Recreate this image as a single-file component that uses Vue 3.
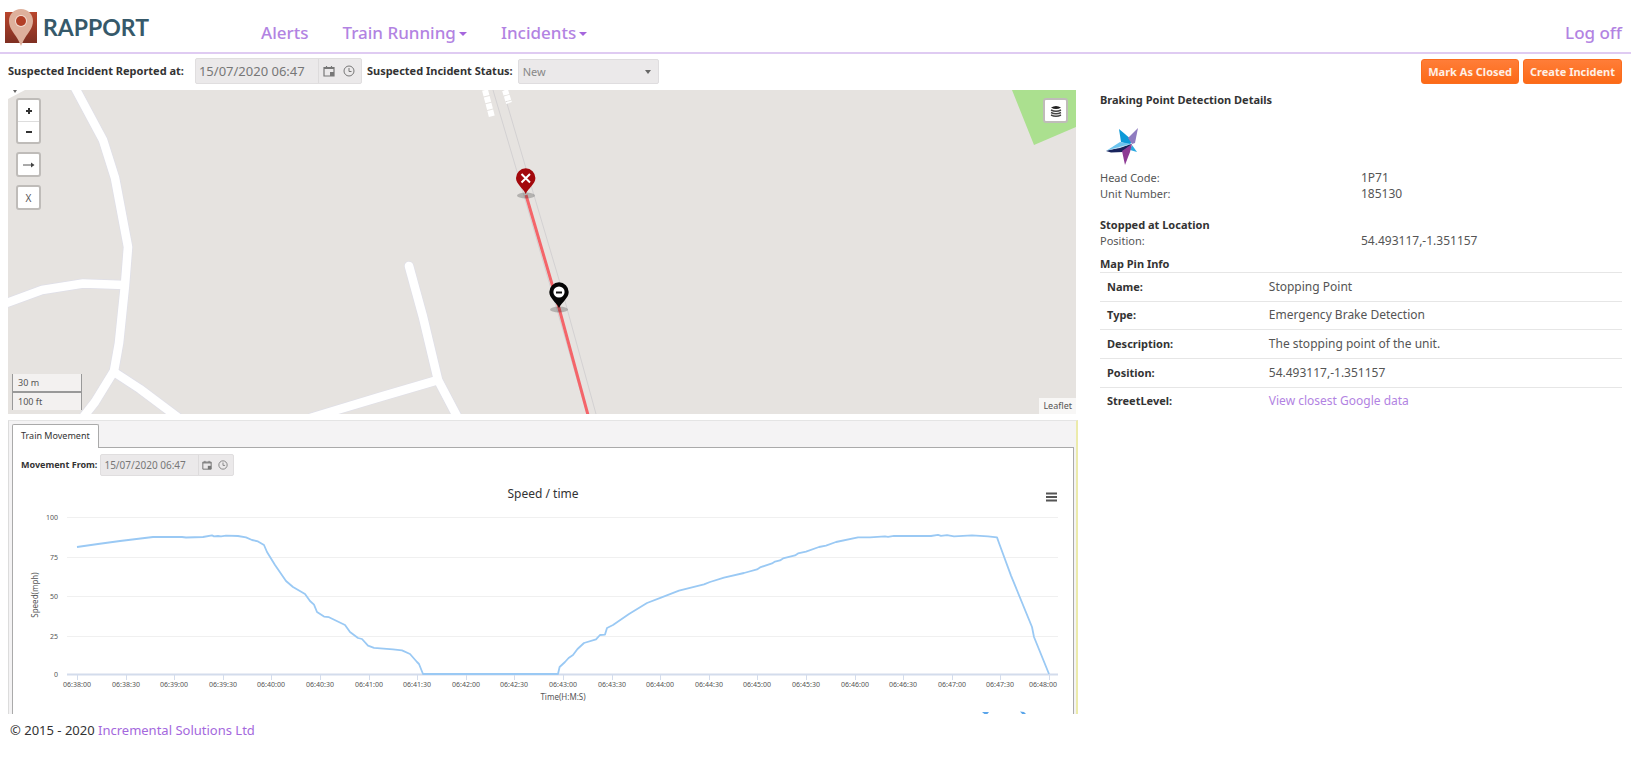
<script setup>
import { ref } from 'vue'

const reportedAt = ref('15/07/2020 06:47')
const movementFrom = ref('15/07/2020 06:47')
const status = ref('New')

const summary = [
  { label: 'Head Code:', value: '1P71' },
  { label: 'Unit Number:', value: '185130' },
]

const pinInfo = [
  { label: 'Name:', value: 'Stopping Point' },
  { label: 'Type:', value: 'Emergency Brake Detection' },
  { label: 'Description:', value: 'The stopping point of the unit.' },
  { label: 'Position:', value: '54.493117,-1.351157' },
  { label: 'StreetLevel:', value: 'View closest Google data', link: true },
]

const gridLines = [
  { y: 517, label: '100' },
  { y: 557, label: '75' },
  { y: 596, label: '50' },
  { y: 636, label: '25' },
  { y: 674, label: '0' },
]

const ticks = Array.from({ length: 21 }, (_, i) => {
  const minute = 38 + Math.floor(i / 2)
  const x = Math.round(77 + i * 48.6)
  return { x, textX: i === 20 ? x - 6 : x, label: `06:${minute}:${i % 2 ? '30' : '00'}` }
})

const speedLine = [
  [77, 547], [98, 544], [120, 541], [153, 537], [182, 537], [186, 537.5], [203, 537], [212, 535.4],
  [214, 536.4], [218, 536], [221, 536.4], [226, 535.6], [238, 536], [246, 537.4], [252, 540], [258, 541.4],
  [264, 545], [267, 552], [275, 565], [286, 581], [293, 587], [305, 594], [310, 601], [314, 604.6],
  [317, 612], [324, 616.6], [329, 617.2], [345, 625], [350, 632], [358, 638], [362, 639], [368, 645.6],
  [374, 647.8], [393, 649.4], [402, 650.4], [410, 654], [417, 662], [419, 664], [423, 674], [558, 674],
  [559.6, 667], [565, 662], [568.6, 658], [573, 655], [577.5, 649], [584, 643], [596, 639.4], [600, 635],
  [605, 634.6], [607, 628], [613, 625], [629, 614], [647, 603], [661, 597.6], [679, 590.6], [704, 584.4],
  [710, 582], [724, 577.6], [744, 573], [757, 569.4], [760, 567.4], [772, 563.4], [775, 561.6], [780, 560.4],
  [783, 558.4], [795, 555.4], [798, 553.4], [806, 551.6], [819, 547], [826, 545.6], [836, 542], [858, 537.4],
  [870, 537.4], [885, 536.4], [888, 536.8], [894, 535.8], [931, 536], [938, 534.8], [941, 535.8], [947, 535.2],
  [954, 536.4], [972, 535.4], [988, 536.4], [997, 537.4], [999, 543], [1011, 575.6], [1032, 627], [1034, 637],
  [1049, 674],
].map((p) => p.join(',')).join(' ')
</script>

<template>
  <div class="page">
    <header class="header">
      <a class="brand" href="#" aria-label="Rapport home">
        <svg class="brand-mark" viewBox="0 0 32 37" aria-hidden="true">
          <defs>
            <linearGradient id="brandRed" x1="0" y1="0" x2="0" y2="1">
              <stop offset="0" stop-color="#b9452c" />
              <stop offset="1" stop-color="#7e2f22" />
            </linearGradient>
          </defs>
          <rect x="0" y="3" width="32" height="31" fill="url(#brandRed)" />
          <path d="M16 0C9 0 4 5 4 12C4 19 9 24 12 29C14 32 15 35 16 37C17 35 18 32 20 29C23 24 28 19 28 12C28 5 23 0 16 0Z" fill="#deb09c" />
          <circle cx="16" cy="12" r="6" fill="#f3ddd3" />
          <circle cx="16" cy="12" r="5" fill="#b23f27" />
        </svg>
        <span class="brand-name">RAPPORT</span>
      </a>
      <nav class="nav">
        <a href="#">Alerts</a>
        <a href="#">Train Running<i class="caret"></i></a>
        <a href="#">Incidents<i class="caret"></i></a>
      </nav>
      <a class="logoff" href="#">Log off</a>
    </header>

    <section class="toolbar">
      <label class="bold reported" for="reported">Suspected Incident Reported at:</label>
      <div class="datebox big">
        <input id="reported" v-model="reportedAt" type="text" />
        <button type="button" aria-label="Pick date">
          <svg viewBox="0 0 12 12"><path d="M1 2.5H11V11H1ZM1 3.5H11M3.5 1V3M8.500 1V3" fill="none" stroke="currentColor" stroke-width="1.200" /><rect x="7" y="7" width="4" height="4" fill="currentColor" /></svg>
        </button>
        <button type="button" aria-label="Pick time">
          <svg viewBox="0 0 12 12"><circle cx="6" cy="6" r="5" fill="none" stroke="currentColor" /><path d="M6 3V6.500H8.500" fill="none" stroke="currentColor" /></svg>
        </button>
      </div>
      <label class="bold" for="status">Suspected Incident Status:</label>
      <div class="selectbox">
        <select id="status" v-model="status">
          <option>New</option>
          <option>Closed</option>
        </select>
        <i class="arrow"></i>
      </div>
      <div class="actions">
        <button type="button">Mark As Closed</button>
        <button type="button">Create Incident</button>
      </div>
    </section>

    <main class="main">
      <div class="left">
        <div class="map">
          <svg class="map-canvas" viewBox="8 90 1068 324" preserveAspectRatio="xMidYMid slice" aria-hidden="true">
            <rect x="8" y="90" width="1068" height="324" fill="#e6e3e0" />
            <path d="M8 90H25L8 99Z" fill="#fff" />
            <path d="M13 90H17L15 93Z" fill="#666" />
            <polygon points="1012,90 1034,145 1076,127 1076,90" fill="#abe08f" />
            <g fill="none" stroke="#dfdfe8" stroke-width="10" stroke-linejoin="round">
              <path d="M73 84L103 140L115 178L128 247L125 285L119 343L114 371L95 402L81 420" />
              <path d="M4 304L42 290L83 283.500L125 285" />
              <path d="M114 372L140 389L180 419" />
              <path d="M409 266L423 317L438 380L459 420" stroke-linecap="round" />
              <path d="M438 380L380 397L310 418" />
            </g>
            <g fill="none" stroke="#fff" stroke-width="8.600" stroke-linejoin="round">
              <path d="M73 84L103 140L115 178L128 247L125 285L119 343L114 371L95 402L81 420" />
              <path d="M4 304L42 290L83 283.500L125 285" />
              <path d="M114 372L140 389L180 419" />
              <path d="M409 266L423 317L438 380L459 420" stroke-linecap="round" />
              <path d="M438 380L380 397L310 418" />
            </g>
            <path d="M493 90L518 175L560 320L587 414M503 90L525 165L560 283L596 414" fill="none" stroke="#d3d1d2" stroke-width="1" />
            <path d="M485 90L492 117" stroke="#fff" stroke-width="6" stroke-dasharray="6 1" />
            <path d="M505 90L509 103" stroke="#fff" stroke-width="6" stroke-dasharray="5 1" />
            <path d="M526 195L559 308L588 415" fill="none" stroke="#f4656a" stroke-width="3" />
            <ellipse cx="526" cy="195.500" rx="9" ry="3" fill="#000" opacity=".22" />
            <path d="M525.700 194C523 188 516 184 516 178A9.700 9.700 0 0 1 535.400 178C535.400 184 528.500 188 525.700 194Z" fill="#a3080c" />
            <path d="M521.500 174L530 182.500M530 174L521.500 182.500" stroke="#fff" stroke-width="2" />
            <ellipse cx="559" cy="309.500" rx="9" ry="3" fill="#000" opacity=".22" />
            <path d="M559 308C556 302 549.300 298 549.300 292A9.700 9.700 0 0 1 568.700 292C568.700 298 562 302 559 308Z" fill="#050505" />
            <circle cx="559" cy="292" r="5.600" fill="#fff" />
            <path d="M556 292.500H562" stroke="#111" stroke-width="2" />
          </svg>
          <div class="map-controls">
            <div class="ctl">
              <button type="button" aria-label="Zoom in"><svg viewBox="0 0 10 10"><path d="M5 2V8M2 5H8" stroke="#333" stroke-width="2" /></svg></button>
              <button type="button" aria-label="Zoom out"><svg viewBox="0 0 10 10"><path d="M2 5H8" stroke="#333" stroke-width="2" /></svg></button>
            </div>
            <div class="ctl"><button type="button" aria-label="Next"><svg viewBox="0 0 12 10"><path d="M0 5H9" stroke="#555" /><path d="M8 2.500L11.500 5L8 7.500Z" fill="#444" /></svg></button></div>
            <div class="ctl"><button type="button">X</button></div>
          </div>
          <div class="ctl layers">
            <button type="button" aria-label="Layers">
              <svg viewBox="0 0 12 12"><path d="M1 2.500Q6 -.5 11 2.500Q6 5.500 1 2.500Z" fill="#222" /><path d="M1 5Q6 7.500 11 5M1 7.500Q6 10 11 7.500M1 10Q6 12.500 11 10" fill="none" stroke="#444" stroke-width="1.400" /></svg>
            </button>
          </div>
          <div class="scale"><div>30 m</div><div>100 ft</div></div>
          <a class="leaflet" href="#">Leaflet</a>
        </div>

        <section class="tabs">
          <div class="tabbar" role="tablist">
            <button type="button" class="tab" role="tab" aria-selected="true">Train Movement</button>
          </div>
          <div class="tabbody">
            <div class="movement">
              <label class="bold" for="movement">Movement From:</label>
              <div class="datebox">
                <input id="movement" v-model="movementFrom" type="text" />
                <button type="button" aria-label="Pick date">
                  <svg viewBox="0 0 12 12"><path d="M1 2.500H11V11H1ZM1 3.500H11M3.500 1V3M8.500 1V3" fill="none" stroke="currentColor" stroke-width="1.200" /><rect x="7" y="7" width="4" height="4" fill="currentColor" /></svg>
                </button>
                <button type="button" aria-label="Pick time">
                  <svg viewBox="0 0 12 12"><circle cx="6" cy="6" r="5" fill="none" stroke="currentColor" /><path d="M6 3V6.500H8.500" fill="none" stroke="currentColor" /></svg>
                </button>
              </div>
            </div>
            <svg class="chart" viewBox="13 479 1060 235" role="img" aria-label="Speed over time">
              <text x="543" y="498" class="chart-title">Speed / time</text>
              <path d="M1046 493.500H1057M1046 497H1057M1046 500.500H1057" stroke="#555" stroke-width="2" />
              <g v-for="g in gridLines" :key="g.label">
                <path :d="`M67 ${g.y}.500H1058`" :stroke="g.y === 674 ? '#d3dcec' : '#f0f0f0'" :stroke-width="g.y === 674 ? 2 : 1" />
                <text x="58" :y="g.y + 3" class="ylabel">{{ g.label }}</text>
              </g>
              <g v-for="t in ticks" :key="t.label">
                <path :d="`M${t.x}.500 675V680`" stroke="#d3dcec" />
                <text :x="t.textX" y="687" class="xlabel">{{ t.label }}</text>
              </g>
              <polyline :points="speedLine" fill="none" stroke="#9ac9f4" stroke-width="1.800" stroke-linejoin="round" />
              <text x="563" y="700" class="axis">Time(H:M:S)</text>
              <text transform="translate(38 595) rotate(-90)" class="axis">Speed(mph)</text>
              <path d="M982 712H989L987 714.500H985Z" fill="#5aa5ea" />
              <path d="M1020 711.500L1024 712L1027 715H1023Z" fill="#5aa5ea" />
            </svg>
          </div>
        </section>
      </div>

      <aside class="details">
        <h2>Braking Point Detection Details</h2>
        <svg class="star" viewBox="0 0 34 38" aria-label="Operator logo">
          <path d="M13 1L26 12L24 17L15 14Z" fill="#0d9ad8" />
          <path d="M32 0L29 15L26 16L22 10Z" fill="#8f7cc0" />
          <path d="M0 23L14 14L26 16Z" fill="#6cc4ee" />
          <path d="M0 23L26 16L17 24L5 24.500Z" fill="#18235c" />
          <path d="M0 22.500L26 15.500L14 20Z" fill="#c8e8f8" />
          <path d="M26 17L31 24L24 22Z" fill="#2aa9e0" />
          <path d="M26 16L24 24L19 37L16 23Z" fill="#8d3a94" />
        </svg>
        <dl class="pairs">
          <template v-for="s in summary" :key="s.label">
            <dt>{{ s.label }}</dt>
            <dd>{{ s.value }}</dd>
          </template>
        </dl>
        <h2 class="stopped">Stopped at Location</h2>
        <dl class="pairs">
          <dt>Position:</dt>
          <dd>54.493117,-1.351157</dd>
        </dl>
        <h2 class="pin">Map Pin Info</h2>
        <table>
          <tbody>
            <tr v-for="r in pinInfo" :key="r.label">
              <th scope="row">{{ r.label }}</th>
              <td><a v-if="r.link" href="#">{{ r.value }}</a><template v-else>{{ r.value }}</template></td>
            </tr>
          </tbody>
        </table>
      </aside>
    </main>

    <footer class="footer">© 2015 - 2020 <a href="#">Incremental Solutions Ltd</a></footer>
  </div>
</template>

<style>
body {
  background: #fff;
}
</style>

<style scoped>
.page,
.page button,
.page input,
.page select {
  font-family: "Noto Sans", "Open Sans", sans-serif;
}
.page * {
  box-sizing: border-box;
}
.page {
  color: #555;
  font-size: 11px;
  line-height: 16px;
}
a {
  color: #b283e2;
  text-decoration: none;
}
.header {
  display: flex;
  align-items: center;
  height: 54px;
  padding: 2px 9px 0 5px;
  border-bottom: 2px solid #dfcbf2;
}
.brand {
  display: flex;
  align-items: center;
  gap: 6px;
  width: 256px;
  flex: none;
}
.brand-mark {
  width: 32px;
  height: 37px;
}
.brand-name {
  font: 700 23px/32px Lato, sans-serif;
  color: #36596a;
}
.nav {
  display: flex;
  gap: 34px;
  padding-top: 11px;
}
.nav a,
.logoff {
  font-size: 17px;
  font-weight: 500;
  line-height: 24px;
}
.logoff {
  margin-left: auto;
  padding-top: 11px;
}
.caret {
  display: inline-block;
  margin-left: 3px;
  vertical-align: 3px;
  border: 4px solid transparent;
  border-top-color: #a566dd;
  border-bottom: 0;
}
.toolbar {
  display: flex;
  align-items: center;
  height: 36px;
  padding: 0 9px 2px 8px;
  gap: 5px;
}
.bold {
  color: #333;
  font-weight: 700;
  white-space: nowrap;
}
.reported {
  margin-right: 6px;
}
.datebox {
  display: flex;
  align-items: center;
  width: 134px;
  height: 22px;
  padding-right: 2px;
  background: #ebe9ea;
  border: 1px solid #e0dedf;
  border-radius: 2px;
}
.datebox input {
  flex: 1;
  min-width: 0;
  height: 100%;
  padding: 0 3px;
  border: 0;
  border-right: 1px solid #dddbdc;
  background: transparent;
  color: #777;
  font-size: 10px;
}
.datebox button {
  display: flex;
  width: 16px;
  padding: 0 3px;
  border: 0;
  background: transparent;
  color: #777;
}
.datebox svg {
  width: 10px;
  height: 10px;
}
.datebox.big {
  width: 167px;
  height: 26px;
}
.big input {
  font-size: 13px;
}
.big button {
  width: 20px;
  padding: 0 4px;
}
.big svg {
  width: 12px;
  height: 12px;
}
.selectbox {
  position: relative;
  width: 141px;
}
.selectbox select {
  width: 100%;
  height: 25px;
  padding: 0 4px;
  appearance: none;
  background: #ebe9ea;
  border: 1px solid #dfdddf;
  border-radius: 2px;
  color: #888;
  font-size: 11px;
}
.arrow {
  position: absolute;
  right: 8px;
  top: 11px;
  border: 3px solid transparent;
  border-top: 4px solid #666;
  border-bottom: 0;
  pointer-events: none;
}
.actions {
  display: flex;
  gap: 4px;
  margin-left: auto;
}
.actions button {
  height: 25px;
  padding: 0 6px;
  border: 1px solid #fb6d1e;
  border-radius: 3px;
  background: linear-gradient(#ff7d38, #fc6a17);
  color: #fff0e6;
  font-size: 11px;
  font-weight: 700;
}
.main {
  display: grid;
  grid-template-columns: minmax(0, 1070fr) minmax(0, 522fr);
  gap: 22px;
  padding: 0 9px 0 8px;
}
.map {
  position: relative;
  height: 324px;
  margin-right: 2px;
  overflow: hidden;
}
.map-canvas {
  display: block;
  width: 100%;
  height: 100%;
}
.map-controls {
  position: absolute;
  left: 8px;
  top: 8px;
  display: grid;
  gap: 8px;
}
.ctl {
  width: 25px;
  border: 2px solid #bfbcb9;
  border-radius: 3px;
  background: #fff;
}
.ctl button {
  display: flex;
  align-items: center;
  justify-content: center;
  width: 100%;
  height: 21px;
  padding: 0;
  border: 0;
  background: transparent;
  color: #555;
  font-size: 10px;
}
.ctl button + button {
  border-top: 1px solid #ddd;
}
.ctl svg {
  width: 12px;
  height: 10px;
}
.layers {
  position: absolute;
  right: 8px;
  top: 8px;
}
.layers svg {
  height: 12px;
}
.scale {
  position: absolute;
  left: 4px;
  bottom: 4px;
  width: 70px;
  color: #555;
  font-size: 9px;
  line-height: 17px;
}
.scale div {
  height: 18px;
  padding-left: 5px;
  border: 1px solid #999;
  border-top: 0;
  background: rgba(255, 255, 255, 0.5);
}
.scale div + div {
  border-top: 1px solid #999;
  border-bottom: 0;
}
.leaflet {
  position: absolute;
  right: 0;
  bottom: 0;
  padding: 0 4px;
  background: rgba(255, 255, 255, 0.7);
  color: #555;
  font-size: 9px;
  line-height: 16px;
}
.tabs {
  margin-top: 6px;
  padding: 3px 2px 0 3px;
  background: #f4f3f4;
  border: 1px solid #e4e4e4;
  border-right: 2px solid #ecebab;
  border-bottom: 0;
  border-left-color: #dcdcdc;
}
.tabbar {
  display: flex;
  height: 23px;
}
.tab {
  height: 24px;
  padding: 0 8px 2px;
  border: 1px solid #aaa;
  border-bottom: 0;
  border-radius: 2px 2px 0 0;
  background: #fff;
  color: #333;
  font-size: 9px;
  z-index: 1;
}
.tabbody {
  border: 1px solid #aaa;
  border-bottom: 0;
  background: #fff;
}
.movement {
  display: flex;
  align-items: center;
  gap: 3px;
  padding: 6px 0 3px 8px;
}
.movement .bold {
  font-size: 9px;
}
.chart {
  display: block;
  width: 100%;
}
.chart text {
  fill: #555;
  text-anchor: middle;
  font-size: 7px;
}
.chart .chart-title {
  font-size: 12px;
  fill: #333;
}
.chart .ylabel {
  text-anchor: end;
}
.chart .axis {
  font-size: 8px;
}
.details {
  padding-top: 2px;
}
h2 {
  margin: 0;
  color: #333;
  font-size: 11px;
  font-weight: 700;
  line-height: 16px;
}
.star {
  display: block;
  width: 34px;
  height: 38px;
  margin: 20px 0 4px 6px;
}
.pairs {
  display: grid;
  grid-template-columns: 1fr 1fr;
  margin: 0;
}
dd {
  margin: 0;
  font-size: 12px;
}
.stopped {
  margin-top: 15px;
}
.pin {
  margin-top: 7px;
}
table {
  width: 100%;
  height: 143px;
  border-collapse: collapse;
}
th,
td {
  padding: 0 7px;
  border-top: 1px solid #e6e6e6;
  text-align: left;
  font-weight: 400;
}
th {
  width: 31%;
  padding-right: 0;
  color: #333;
  font-weight: 700;
}
td {
  font-size: 12px;
}
.footer {
  padding: 8px 10px;
  color: #333;
  font-size: 13px;
}
.footer a {
  color: #a468dd;
}
</style>
